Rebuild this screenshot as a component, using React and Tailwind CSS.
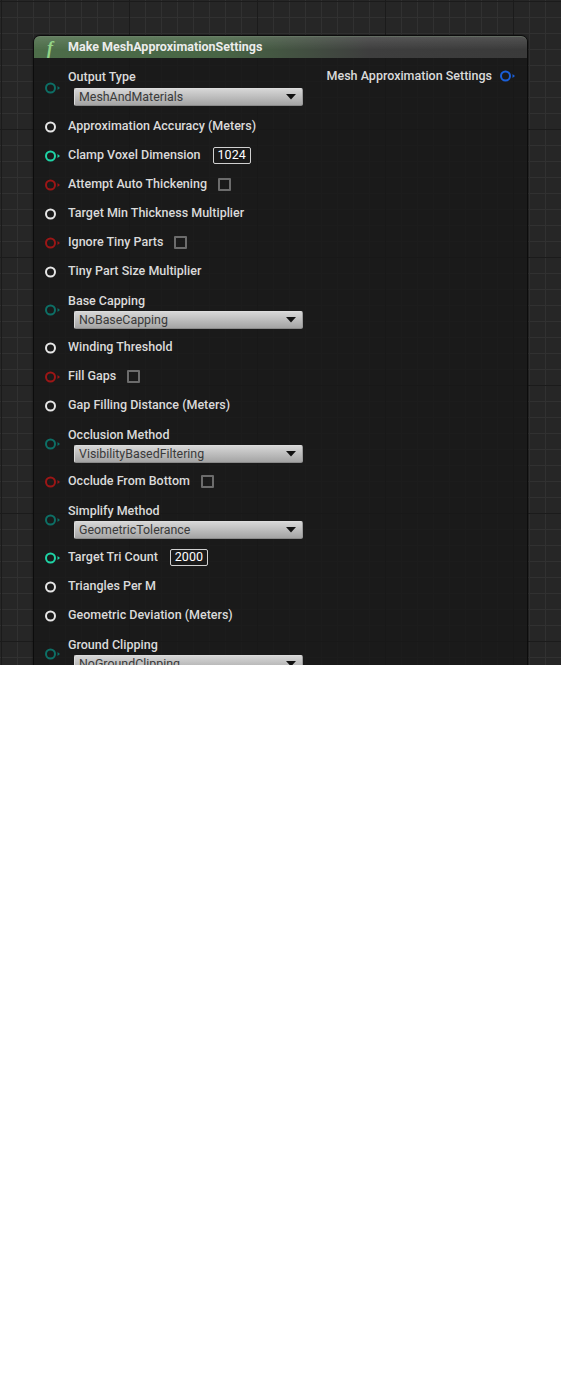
import React from 'react';

const PIN = {
  enum: '#0d6f66',
  int: '#1fd3a5',
  bool: '#9c1616',
  real: '#e6e6e6',
  struct: '#1a5fd8',
};

const rows = [
  { label: 'Output Type', pin: 'enum', dropdown: 'MeshAndMaterials', first: true },
  { label: 'Approximation Accuracy (Meters)', pin: 'real' },
  { label: 'Clamp Voxel Dimension', pin: 'int', value: '1024' },
  { label: 'Attempt Auto Thickening', pin: 'bool', check: true },
  { label: 'Target Min Thickness Multiplier', pin: 'real' },
  { label: 'Ignore Tiny Parts', pin: 'bool', check: true },
  { label: 'Tiny Part Size Multiplier', pin: 'real' },
  { label: 'Base Capping', pin: 'enum', dropdown: 'NoBaseCapping' },
  { label: 'Winding Threshold', pin: 'real' },
  { label: 'Fill Gaps', pin: 'bool', check: true },
  { label: 'Gap Filling Distance (Meters)', pin: 'real' },
  { label: 'Occlusion Method', pin: 'enum', dropdown: 'VisibilityBasedFiltering' },
  { label: 'Occlude From Bottom', pin: 'bool', check: true },
  { label: 'Simplify Method', pin: 'enum', dropdown: 'GeometricTolerance' },
  { label: 'Target Tri Count', pin: 'int', value: '2000' },
  { label: 'Triangles Per M', pin: 'real' },
  { label: 'Geometric Deviation (Meters)', pin: 'real' },
  { label: 'Ground Clipping', pin: 'enum', dropdown: 'NoGroundClipping' },
];

function Pin({ type }) {
  const c = PIN[type];
  return (
    <svg width="16" height="12" viewBox="0 0 16 12" className="shrink-0">
      <circle cx="5.5" cy="6" r="4.5" fill="none" stroke={c} strokeWidth="2" />
      {type !== 'real' && <polygon points="12.5,4 15,6 12.5,8" fill={c} />}
    </svg>
  );
}

function Dropdown({ text, first }) {
  return (
    <div className={`ml-[6px] ${first ? 'mt-[3px]' : 'mt-[2px]'} w-[229px] h-[18px] flex items-center justify-between border border-[#dcdcdc] border-b-[#8a8a8a] border-r-[#9a9a9a] rounded-[2px] bg-[linear-gradient(to_bottom,#d6d6d6,#b8b8b8_60%,#a4a4a4)] pl-[4px] pr-[6px]`}>
      <span className="text-[12.4px] leading-none text-[#3a3a3a]">{text}</span>
      <svg width="10" height="6" viewBox="0 0 10 6"><polygon points="0,0 10,0 5,5.5" fill="#111" /></svg>
    </div>
  );
}

function Row({ row }) {
  if (row.dropdown) {
    return (
      <div className={`${row.first ? 'h-[49px]' : 'h-[47px]'} flex items-center pl-[11px]`}>
        <Pin type={row.pin} />
        <div className={`ml-[7px] self-start flex flex-col ${row.first ? 'pt-[5px]' : 'pt-[6px]'}`}>
          <span className="h-[17px] leading-[17px] text-[12.5px] font-medium text-[#dadada]">{row.label}</span>
          <Dropdown text={row.dropdown} first={row.first} />
        </div>
      </div>
    );
  }
  return (
    <div className="h-[29px] flex items-center pl-[11px]">
      <Pin type={row.pin} />
      <span className="ml-[7px] text-[12.5px] font-medium text-[#dadada]">{row.label}</span>
      {row.check && <span className="ml-[11px] w-[13px] h-[13px] border-2 border-[#6c6c6c] rounded-[1px]" />}
      {row.value && (
        <span className="ml-[12px] h-[17px] px-[4px] flex items-center border border-[#d0d0d0] rounded-[2px] text-[12.5px] text-white">{row.value}</span>
      )}
    </div>
  );
}

export default function App() {
  return (
    <div className="font-[Roboto,sans-serif]">
      <div className="h-[665px] overflow-hidden pt-[35px] pl-[33px] bg-[#262626] bg-[image:linear-gradient(to_right,#1b1b1b_1px,transparent_1px),linear-gradient(to_bottom,#1b1b1b_1px,transparent_1px),linear-gradient(to_right,#313131_1px,transparent_1px),linear-gradient(to_bottom,#313131_1px,transparent_1px)] bg-[size:128px_128px,128px_128px,16px_16px,16px_16px] bg-[position:1px_1px]">
        <div className="w-[495px] rounded-t-[7px] border border-[#0c0c0c] shadow-[0_0_2px_rgba(0,0,0,0.6)]">
          <div className="h-[22px] rounded-t-[6px] flex items-center border-t border-[#8a9a88]/50 bg-[linear-gradient(to_bottom,rgba(255,255,255,0.12),rgba(255,255,255,0)_60%),linear-gradient(to_right,#4d6d49,#486545_38%,#3e3e3e_68%,#3a3a3a)]">
            <span className="ml-[13px] w-[14px] text-[18px] leading-none italic font-bold font-['Liberation_Serif',serif] text-[#93d487]">f</span>
            <span className="ml-[7px] text-[12.5px] font-bold text-[#ececec]">Make MeshApproximationSettings</span>
          </div>
          <div className="relative pt-[5px] pb-[20px] bg-[rgba(24,24,24,0.8)]">
            {rows.map(r => <Row key={r.label} row={r} />)}
            <div className="absolute right-[11px] top-[8px] h-[20px] flex items-center gap-[8px]">
              <span className="text-[12.5px] font-medium text-[#dadada]">Mesh Approximation Settings</span>
              <Pin type="struct" />
            </div>
          </div>
        </div>
      </div>
    </div>
  );
}
